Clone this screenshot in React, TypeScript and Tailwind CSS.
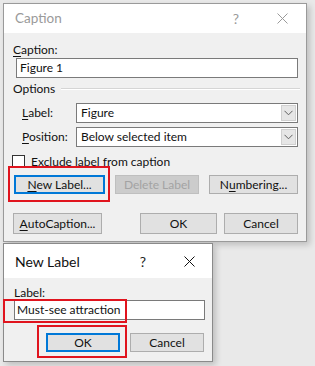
import React from 'react'

const font = { fontFamily: 'Lato, "Liberation Sans", sans-serif' }

const U = ({ children }: { children: React.ReactNode }) => <span className="underline underline-offset-2">{children}</span>

const CloseIcon = () => (
    <svg width="11" height="11" viewBox="0 0 11 11" className="block">
        <path d="M0.5 0.5 L10.5 10.5 M10.5 0.5 L0.5 10.5" stroke="currentColor" strokeWidth="1" fill="none" />
    </svg>
)

const Chevron = () => (
    <svg width="9" height="6" viewBox="0 0 9 6" className="block">
        <path d="M0.5 0.8 L4.5 4.8 L8.5 0.8" stroke="#606060" strokeWidth="1" fill="none" />
    </svg>
)

const RedBox = ({ className }: { className: string }) => (
    <span className={`pointer-events-none absolute border-2 border-[#e0141e] ${className}`} />
)

type BtnProps = {
    children: React.ReactNode;
    w: string;
    h?: string;
    primary?: boolean;
    disabled?: boolean;
};

const Btn = ({ children, w, h = 'h-[19px]', primary, disabled }: BtnProps) => (
    <div
        className={`${w} ${h} flex items-center justify-center text-[12px] leading-none ${
            primary
                ? 'border-2 border-[#0078d7] bg-[#e1e1e1] text-[#111]'
                : disabled
                    ? 'border border-[#bfbfbf] bg-[#cccccc] text-[#a3a3a3]'
                    : 'border border-[#adadad] bg-[#e1e1e1] text-[#111]'
        }`}
    >
        {children}
    </div>
)

const Select = ({ value }: { value: string }) => (
    <div className="flex h-[20px] w-[222px] items-stretch border border-[#7a7a7a] bg-white">
        <div className="flex flex-1 items-center pl-[4px] text-[12px] text-[#111]">{value}</div>
        <div className="m-px flex w-[15px] items-center justify-center border border-[#d0d0d0] bg-[#e6e6e6]">
            <Chevron />
        </div>
    </div>
)

const CaptionDialog = () => (
    <div className="relative ml-[3px] mt-[3px] w-[304px] border border-[#9a9a9a] bg-[#f0f0f0] shadow-[3px_3px_6px_rgba(0,0,0,0.18)]">
        <div className="flex h-[29px] items-center bg-white pl-[11px] text-[#9a9a9a]">
            <span className="text-[13.5px]">Caption</span>
            <span className="ml-auto text-[14px] text-[#9a9a9a]">?</span>
            <span className="ml-[38px] mr-[18px]"><CloseIcon /></span>
        </div>

        <div className="flex flex-col pb-[7px] text-[12px] text-[#111]">
            <div className="ml-[9px] mt-[9px] h-[15px] leading-[15px]"><U>C</U>aption:</div>
            <div className="ml-[12px] mt-px flex h-[20px] w-[282px] items-center border border-[#7a7a7a] bg-white pl-[3px]">Figure 1</div>

            <div className="ml-[9px] mr-[6px] mt-[3px] flex h-[15px] items-center leading-[15px]">
                <span>Options</span>
                <span className="ml-[6px] flex-1 border-t border-b border-t-[#d5d5d5] border-b-white" />
            </div>

            <div className="mt-[7px] flex items-center">
                <span className="ml-[18px] w-[54px]"><U>L</U>abel:</span>
                <Select value="Figure" />
            </div>
            <div className="mt-[4px] flex items-center">
                <span className="ml-[18px] w-[54px]"><U>P</U>osition:</span>
                <Select value="Below selected item" />
            </div>

            <div className="ml-[8px] mt-[8px] flex h-[13px] items-center">
                <span className="h-[13px] w-[13px] border border-[#333] bg-white" />
                <span className="ml-[6px]">Exclude label from caption</span>
            </div>

            <div className="ml-[10px] mt-[7px] flex items-center">
                <div className="relative">
                    <Btn w="w-[91px]" primary><U>N</U>ew Label...</Btn>
                    <RedBox className="-left-[6px] -top-[9px] h-[36px] w-[102px]" />
                </div>
                <div className="ml-[10px]"><Btn w="w-[84px]" disabled>Delete Label</Btn></div>
                <div className="ml-[10px]"><Btn w="w-[89px]">N<U>u</U>mbering...</Btn></div>
            </div>

            <div className="ml-[9px] mt-[19px] flex items-center">
                <Btn w="w-[89px]" h="h-[21px]"><U>A</U>utoCaption...</Btn>
                <div className="ml-[38px]"><Btn w="w-[77px]" h="h-[21px]">OK</Btn></div>
                <div className="ml-[7px]"><Btn w="w-[74px]" h="h-[21px]">Cancel</Btn></div>
            </div>
        </div>
    </div>
)

const NewLabelDialog = () => (
    <div className="relative ml-[3px] mt-[1px] w-[210px] border border-[#8a8a8a] bg-[#f0f0f0] shadow-[3px_3px_6px_rgba(0,0,0,0.18)]">
        <div className="flex h-[34px] items-center bg-white pl-[11px] text-[#111]">
            <span className="text-[14px]">New Label</span>
            <span className="ml-auto text-[14px] text-[#222]">?</span>
            <span className="ml-[38px] mr-[17px]"><CloseIcon /></span>
        </div>
        <div className="flex flex-col pb-[9px] text-[12px] text-[#111]">
            <div className="ml-[10px] mt-[7px] h-[15px] leading-[15px]">Label:</div>
            <div className="relative ml-[10px] flex h-[20px] w-[191px] items-center border border-[#7a7a7a] bg-white pl-[2px]">
                Must-see attraction
                <RedBox className="-left-[12px] -top-[2px] h-[24px] w-[124px]" />
            </div>
            <div className="ml-[42px] mt-[13px] flex items-center">
                <div className="relative">
                    <Btn w="w-[74px]" primary>OK</Btn>
                    <RedBox className="-left-[9px] -top-[8px] h-[33px] w-[90px]" />
                </div>
                <div className="ml-[10px]"><Btn w="w-[74px]">Cancel</Btn></div>
            </div>
        </div>
    </div>
)

export default function App() {
    return (
        <div className="h-[366px] w-[315px] overflow-hidden bg-[#e9e9e9]" style={font}>
            <CaptionDialog />
            <NewLabelDialog />
        </div>
    )
}
